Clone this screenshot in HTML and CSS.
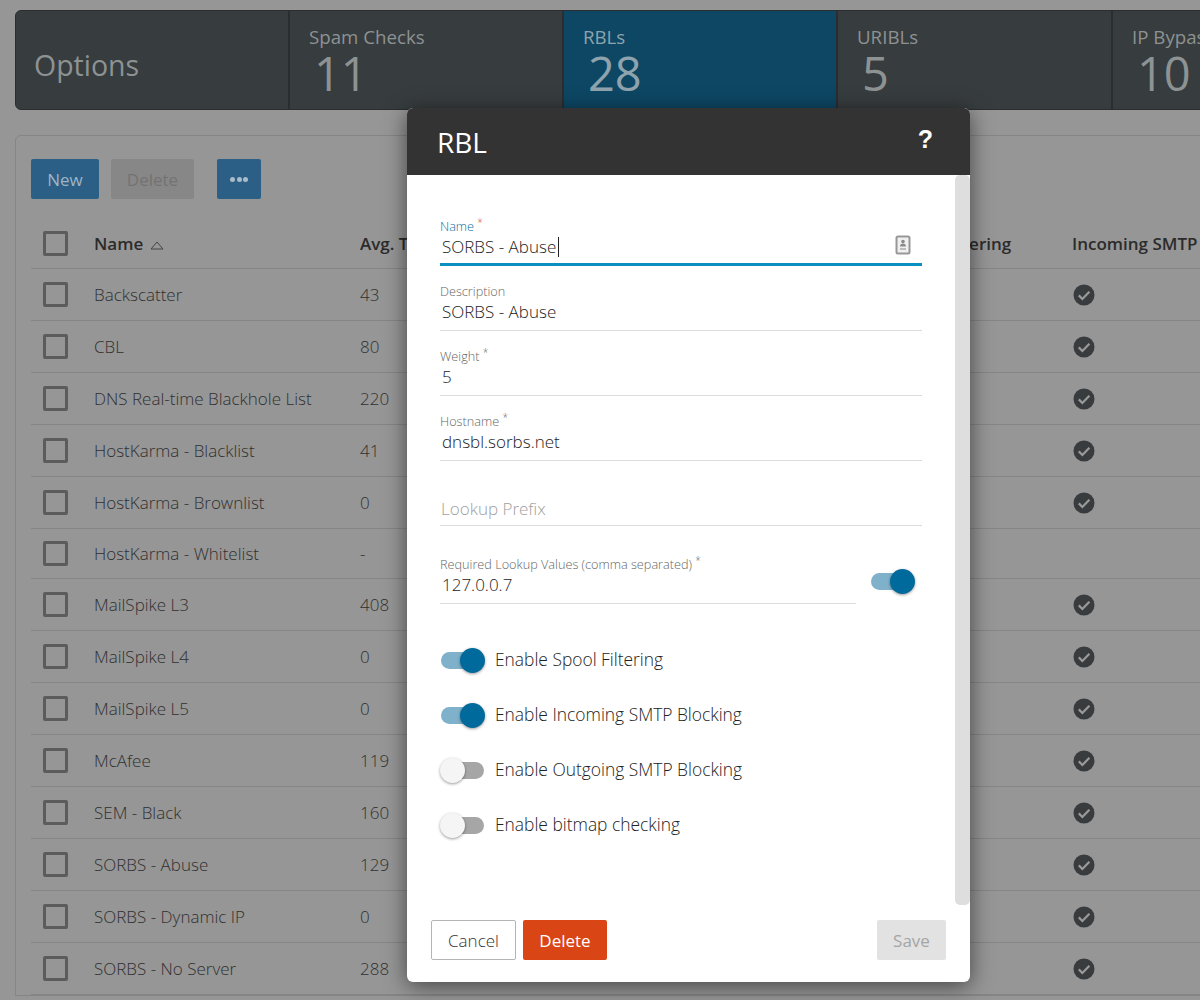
FILE: index.html
```html
<!DOCTYPE html>
<html lang="en">
<head>
    <meta charset="UTF-8">
    <title>RBL Options</title>
    <link rel="stylesheet" href="styles.css">
</head>
<body>

<svg class="defs" width="0" height="0">
    <symbol id="check" viewBox="0 0 22 22">
        <circle cx="11" cy="11" r="10.5" fill="#383c3e"/>
        <path d="M5.8 11.4l3.6 3.6 7-7.2" fill="none" stroke="#9a9a9a" stroke-width="2.2"/>
    </symbol>
</svg>

<div class="page">
    <div class="tiles">
        <div class="tile tile-title">Options</div>
        <div class="tile"><span class="tile-label">Spam Checks</span><span class="tile-count">11</span></div>
        <div class="tile tile-active"><span class="tile-label">RBLs</span><span class="tile-count">28</span></div>
        <div class="tile"><span class="tile-label">URIBLs</span><span class="tile-count">5</span></div>
        <div class="tile"><span class="tile-label">IP Bypass</span><span class="tile-count">10</span></div>
    </div>

    <div class="panel">
        <div class="toolbar">
            <button class="btn btn-blue">New</button>
            <button class="btn btn-off">Delete</button>
            <button class="btn btn-blue btn-more"><i></i><i></i><i></i></button>
        </div>

        <div class="row row-head">
            <span class="box"></span>
            <span>Name <svg class="sort" width="14" height="9" viewBox="0 0 14 9"><path d="M1 8h12L7 1z" fill="none" stroke="#444" stroke-width="1"/></svg></span>
            <span>Avg. Time</span>
            <span>Spool Filtering</span>
            <span>Incoming SMTP Blocking</span>
        </div>
        <div class="row"><span class="box"></span><span>Backscatter</span><span>43</span><span></span><svg class="tick"><use href="#check"/></svg></div>
        <div class="row"><span class="box"></span><span>CBL</span><span>80</span><span></span><svg class="tick"><use href="#check"/></svg></div>
        <div class="row"><span class="box"></span><span>DNS Real-time Blackhole List</span><span>220</span><span></span><svg class="tick"><use href="#check"/></svg></div>
        <div class="row"><span class="box"></span><span>HostKarma - Blacklist</span><span>41</span><span></span><svg class="tick"><use href="#check"/></svg></div>
        <div class="row"><span class="box"></span><span>HostKarma - Brownlist</span><span>0</span><span></span><svg class="tick"><use href="#check"/></svg></div>
        <div class="row row-short"><span class="box"></span><span>HostKarma - Whitelist</span><span>-</span><span></span><span></span></div>
        <div class="row"><span class="box"></span><span>MailSpike L3</span><span>408</span><span></span><svg class="tick"><use href="#check"/></svg></div>
        <div class="row"><span class="box"></span><span>MailSpike L4</span><span>0</span><span></span><svg class="tick"><use href="#check"/></svg></div>
        <div class="row"><span class="box"></span><span>MailSpike L5</span><span>0</span><span></span><svg class="tick"><use href="#check"/></svg></div>
        <div class="row"><span class="box"></span><span>McAfee</span><span>119</span><span></span><svg class="tick"><use href="#check"/></svg></div>
        <div class="row"><span class="box"></span><span>SEM - Black</span><span>160</span><span></span><svg class="tick"><use href="#check"/></svg></div>
        <div class="row"><span class="box"></span><span>SORBS - Abuse</span><span>129</span><span></span><svg class="tick"><use href="#check"/></svg></div>
        <div class="row"><span class="box"></span><span>SORBS - Dynamic IP</span><span>0</span><span></span><svg class="tick"><use href="#check"/></svg></div>
        <div class="row"><span class="box"></span><span>SORBS - No Server</span><span>288</span><span></span><svg class="tick"><use href="#check"/></svg></div>
    </div>
</div>

<div class="modal">
    <div class="modal-head">
        <h2>RBL</h2>
        <span class="help">?</span>
    </div>

    <div class="modal-body">
        <div class="form">
            <div class="field field-focus">
                <label>Name <sup>*</sup></label>
                <div class="value">SORBS - Abuse<span class="caret"></span></div>
                <svg class="card" width="16" height="20" viewBox="0 0 16 20">
                    <rect x="1.5" y="1.5" width="13" height="17" rx="1.5" fill="#f0f0f0" stroke="#979797" stroke-width="2"/>
                    <circle cx="8" cy="6.500" r="1.800" fill="#8a8a8a"/>
                    <path d="M5 11.500c0-2 1.300-3 3-3s3 1 3 3z" fill="#8a8a8a"/>
                    <path d="M5 14h6" stroke="#bdbdbd" stroke-width="2"/>
                </svg>
            </div>
            <div class="field">
                <label>Description</label>
                <div class="value">SORBS - Abuse</div>
            </div>
            <div class="field">
                <label>Weight <sup>*</sup></label>
                <div class="value">5</div>
            </div>
            <div class="field">
                <label>Hostname <sup>*</sup></label>
                <div class="value">dnsbl.sorbs.net</div>
            </div>
            <div class="field">
                <label></label>
                <div class="value value-empty">Lookup Prefix</div>
            </div>

            <div class="lookup">
                <div class="field">
                    <label>Required Lookup Values (comma separated) <sup>*</sup></label>
                    <div class="value">127.0.0.7</div>
                </div>
                <span class="switch switch-on"></span>
            </div>

            <div class="options">
                <div class="option"><span class="switch switch-on"></span><span class="option-text">Enable Spool Filtering</span></div>
                <div class="option"><span class="switch switch-on"></span><span class="option-text">Enable Incoming SMTP Blocking</span></div>
                <div class="option"><span class="switch"></span><span class="option-text">Enable Outgoing SMTP Blocking</span></div>
                <div class="option"><span class="switch"></span><span class="option-text">Enable bitmap checking</span></div>
            </div>
        </div>
        <div class="scrollbar"></div>
    </div>

    <div class="modal-foot">
        <button class="btn btn-cancel">Cancel</button>
        <button class="btn btn-delete">Delete</button>
        <button class="btn btn-save">Save</button>
    </div>
</div>

</body>
</html>
```

FILE: styles.css
```css
html, body {
    height: 1000px;
    overflow: hidden;
}
body {
    margin: 0;
    font-family: "Open Sans", "Noto Sans", sans-serif;
    background-color: #969696;
    color: #333;
}
.defs {
    display: block;
}
.page {
    width: 1400px;
    padding: 10px 0 0 15px;
}
.tiles {
    display: grid;
    grid-template-columns: 274px 274px 274px 275px 274px;
    height: 100px;
    box-sizing: border-box;
    background-color: #373c3e;
    border: 1px solid #2a2e30;
    border-radius: 6px 0 0 6px;
    overflow: hidden;
}
.tile {
    display: flex;
    flex-direction: column;
    padding: 14px 0 0 19px;
    border-right: 2px solid #2a2e30;
    color: #8d9293;
}
.tile-title {
    justify-content: center;
    padding: 10px 0 0 18px;
    font-size: 28.500px;
}
.tile-active {
    background-color: #0d4764;
    color: #8ea3ad;
}
.tile-label {
    font-size: 18.700px;
    line-height: 24px;
}
.tile-count {
    padding-left: 5px;
    font-size: 47px;
    line-height: 48px;
}
.panel {
    margin-top: 25px;
    padding: 23px 0 0 15px;
    border: 1px solid #858585;
    border-radius: 6px 0 0 0;
}
.toolbar {
    display: flex;
    height: 40px;
    margin-bottom: 21px;
}
.btn {
    height: 40px;
    padding: 0;
    border: none;
    border-radius: 2px;
    font-family: inherit;
    font-size: 17px;
}
.btn-blue {
    width: 68px;
    background-color: #2b5f85;
    color: #9fb4c4;
}
.btn-off {
    width: 83px;
    margin-left: 12px;
    background-color: #878787;
    color: #737373;
}
.btn-more {
    display: flex;
    justify-content: center;
    align-items: center;
    gap: 1.500px;
    width: 44px;
    margin-left: 23px;
}
.btn-more i {
    width: 5px;
    height: 5px;
    border-radius: 50%;
    background-color: #a9bccb;
}
.row {
    display: grid;
    grid-template-columns: 63px 266px 534px 178px auto;
    align-items: center;
    height: 52px;
    box-sizing: border-box;
    border-bottom: 1px solid #858585;
    font-size: 17px;
    font-weight: 300;
    color: #303030;
    white-space: nowrap;
}
.row-head {
    height: 49px;
    padding-bottom: 1px;
    font-weight: 600;
    color: #2b2b2b;
}
.row-short {
    height: 50px;
}
.box {
    display: block;
    width: 25px;
    height: 25px;
    margin-left: 12px;
    box-sizing: border-box;
    border: 3px solid #5c5c5c;
    border-radius: 2px;
}
.sort {
    margin-left: 2px;
}
.tick {
    width: 22px;
    height: 22px;
    margin-top: 1px;
    margin-left: 1px;
}
.modal {
    position: absolute;
    top: 108px;
    left: 407px;
    display: flex;
    flex-direction: column;
    width: 563px;
    height: 874px;
    background-color: white;
    border-radius: 6px;
    box-shadow: 0 4px 22px rgba(0, 0, 0, 0.55);
    overflow: hidden;
}
.modal-head {
    display: flex;
    justify-content: space-between;
    align-items: center;
    flex: none;
    height: 67px;
    padding: 0 37px 0 30px;
    box-sizing: border-box;
    background-color: #333;
    color: white;
}
.modal-head h2 {
    margin: 0;
    font-size: 28px;
    font-weight: 400;
}
.help {
    margin-bottom: 4px;
    font-family: "Liberation Sans", Arial, sans-serif;
    font-size: 25px;
    font-weight: 700;
}
.modal-body {
    display: flex;
    flex: none;
    height: 730px;
}
.form {
    width: 548px;
    padding: 43px 33px 0;
    box-sizing: border-box;
}
.scrollbar {
    width: 15px;
    background-color: #dedede;
    border-radius: 5px;
}
.field {
    position: relative;
    height: 48px;
    margin-bottom: 17px;
    box-sizing: border-box;
    border-bottom: 1px solid #dcdcdc;
}
.field-focus {
    border-bottom: 3px solid #0a8fc0;
}
.field label {
    display: block;
    height: 17px;
    font-size: 12.700px;
    line-height: 16px;
    font-weight: 300;
    color: #666;
}
.field-focus label {
    color: #0b6f9e;
}
.field sup {
    font-size: 10px;
    line-height: 0;
}
.field-focus sup {
    color: #d9431a;
}
.value {
    padding-left: 2px;
    font-size: 17px;
    line-height: 24px;
    font-weight: 300;
    color: #222;
}
.value-empty {
    padding: 2px 0 0 1px;
    color: #a0a0a0;
}
.caret {
    display: inline-block;
    width: 1px;
    height: 20px;
    margin-left: 2px;
    vertical-align: -4px;
    background-color: #222;
}
.card {
    position: absolute;
    top: 17px;
    right: 11px;
}
.lookup {
    display: flex;
    align-items: flex-start;
    margin-top: 30px;
}
.lookup .field {
    flex: none;
    width: 416px;
    margin-bottom: 0;
}
.lookup .switch {
    margin: 13px 0 0 14px;
}
.options {
    display: flex;
    flex-direction: column;
    gap: 25px;
    margin-top: 41px;
}
.option {
    display: flex;
    align-items: center;
    gap: 10px;
    height: 30px;
    font-size: 17.400px;
    font-weight: 300;
    color: #222;
}
.option-text {
    margin-top: -2px;
}
.switch {
    position: relative;
    flex: none;
    display: block;
    width: 45px;
    height: 25px;
}
.switch::before {
    content: "";
    position: absolute;
    top: 4px;
    left: 1px;
    width: 43px;
    height: 17px;
    border-radius: 9px;
    background-color: #a6a6a6;
}
.switch::after {
    content: "";
    position: absolute;
    top: 0;
    left: 0;
    width: 25px;
    height: 25px;
    border-radius: 50%;
    background-color: #f5f5f5;
    box-shadow: 0 1px 3px rgba(0, 0, 0, 0.4);
}
.switch-on::before {
    background-color: #7fb1cb;
}
.switch-on::after {
    left: 20px;
    background-color: #006a9c;
}
.modal-foot {
    display: flex;
    padding: 15px 24px 0;
}
.btn-cancel {
    width: 85px;
    box-sizing: border-box;
    background-color: white;
    border: 1px solid #b5b5b5;
    font-weight: 300;
    color: #333;
}
.btn-delete {
    width: 84px;
    margin-left: 7px;
    background-color: #d94514;
    color: white;
}
.btn-save {
    width: 69px;
    margin-left: auto;
    background-color: #e2e2e2;
    color: #a5a5a5;
}
```
